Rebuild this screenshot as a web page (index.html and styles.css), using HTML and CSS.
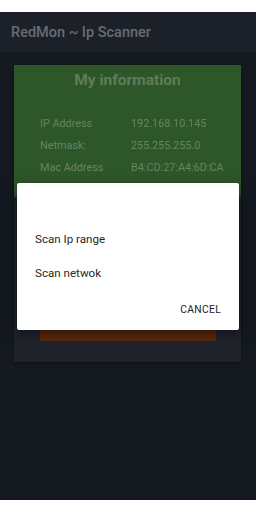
FILE: index.html
```html
<!DOCTYPE html>
<html>
<head>
<meta charset="utf-8">
<link rel="stylesheet" href="styles.css">
</head>
<body>
<div class="status"></div>
<div class="app">
  <div class="appbar">RedMon ~ Ip Scanner</div>
  <div class="content">
    <div class="card">
      <div class="info">
        <div class="info-title">My information</div>
        <div class="rows">
          <div class="row"><span class="label">IP Address</span><span class="value">192.168.10.145</span></div>
          <div class="row"><span class="label">Netmask:</span><span class="value">255.255.255.0</span></div>
          <div class="row"><span class="label">Mac Address</span><span class="value">B4:CD:27:A4:6D:CA</span></div>
        </div>
      </div>
      <div class="lower">
        <div class="scan-btn"></div>
      </div>
    </div>
  </div>
</div>
<div class="navbar"></div>
<div class="scrim">
  <div class="dialog">
    <div class="item">Scan Ip range</div>
    <div class="item">Scan netwok</div>
    <div class="actions"><span class="cancel">CANCEL</span></div>
  </div>
</div>
</body>
</html>
```
FILE: styles.css
```css
html, body {
  margin: 0;
  padding: 0;
  background: #ffffff;
  font-family: Roboto, "Noto Sans", sans-serif;
}
body {
  width: 256px;
  height: 512px;
  overflow: hidden;
  position: relative;
}
.status {
  height: 12px;
  background: #ffffff;
}
.app {
  height: 488px;
  background: #141920;
  display: flex;
  flex-direction: column;
}
.appbar {
  height: 40px;
  background: #1c2129;
  color: #686c72;
  font-size: 14.5px;
  font-weight: 500;
  display: flex;
  align-items: center;
  padding-left: 11px;
  box-sizing: border-box;
}
.content {
  padding: 13px 15px 0 14px;
}
.card {
  background: #1f242c;
  box-shadow: 0 1px 2px rgba(0,0,0,0.35);
}
.info {
  background: #2d5629;
  height: 132px;
  box-sizing: border-box;
  padding-top: 5px;
}
.info-title {
  text-align: center;
  color: #5e7d59;
  font-weight: 700;
  font-size: 15.5px;
  line-height: 20px;
}
.rows {
  padding-top: 22px;
  padding-left: 26px;
}
.row {
  display: flex;
  height: 22px;
  align-items: center;
  font-size: 10.8px;
  color: #66855f;
}
.label {
  width: 91px;
}
.lower {
  height: 165px;
  box-sizing: border-box;
  padding: 122px 25px 21px 26px;
}
.scan-btn {
  height: 22px;
  background: #5a2a0c;
  border-radius: 1px;
}
.navbar {
  height: 12px;
  background: #ffffff;
}
.scrim {
  position: absolute;
  left: 0;
  top: 0;
  width: 256px;
  height: 512px;
  display: flex;
  align-items: center;
  justify-content: center;
}
.dialog {
  width: 222px;
  height: 147px;
  box-sizing: border-box;
  background: #ffffff;
  border-radius: 2px;
  padding-top: 39px;
  box-shadow: 0 4px 12px rgba(0,0,0,0.5);
  display: flex;
  flex-direction: column;
}
.item {
  height: 34px;
  display: flex;
  align-items: center;
  padding-left: 18px;
  font-size: 11.6px;
  color: #262626;
}
.actions {
  height: 40px;
  display: flex;
  align-items: center;
  justify-content: flex-end;
  padding-right: 18px;
}
.cancel {
  font-size: 10.3px;
  font-weight: 400;
  color: #222222;
  letter-spacing: 0.3px;
}
```
